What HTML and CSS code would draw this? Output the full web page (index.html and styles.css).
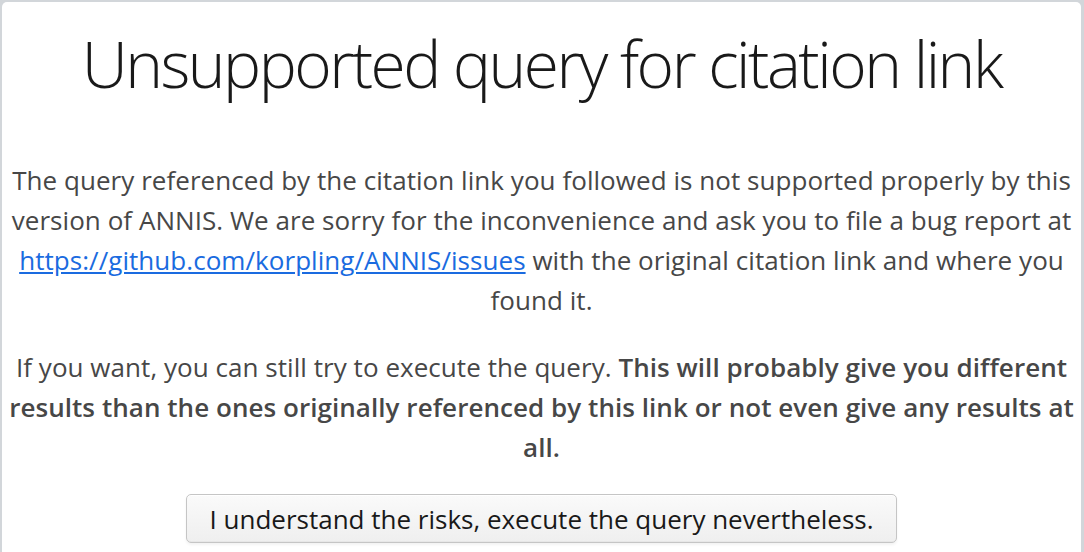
FILE: index.html
```html
<!DOCTYPE html>
<html lang="en">
<head>
<meta charset="utf-8">
<title>Unsupported query</title>
<link rel="stylesheet" href="styles.css">
</head>
<body>
<div class="panel">
  <h1 class="title">Unsupported query for citation link</h1>
  <p class="msg">The query referenced by the citation link you followed is not supported properly by this version of ANNIS. We are sorry for the inconvenience and ask you to file a bug report at <a href="#">https://github.com/korpling/ANNIS/issues</a> with the original citation link and where you found it.</p>
  <p class="msg">If you want, you can still try to execute the query. <strong>This will probably give you different results than the ones originally referenced by this link or not even give any results at all.</strong></p>
  <div class="actions">
    <button class="btn" type="button">I understand the risks, execute the query nevertheless.</button>
  </div>
</div>
</body>
</html>
```
FILE: styles.css
```css
html, body {
  margin: 0;
  padding: 0;
  height: 100%;
  overflow: hidden;
}
body {
  background: #d2d6da;
  font-family: "Open Sans", "DejaVu Sans", sans-serif;
  color: #474747;
}
.panel {
  margin: 2px 3px 0 2px;
  background: #fff;
  border-radius: 5px 5px 0 0;
  padding: 22px 2px 40px;
  min-height: 600px;
  text-align: center;
}
.title {
  margin: 0;
  font-size: 64px;
  line-height: 80px;
  font-weight: 300;
  color: #191919;
  letter-spacing: -2.5px;
}
.msg {
  margin: 56px 0 0;
  font-size: 26px;
  line-height: 40px;
  letter-spacing: 0.05px;
}
.msg + .msg {
  margin-top: 27px;
}
.msg a {
  color: #1a6be0;
  text-decoration: underline;
}
.msg strong {
  font-weight: 600;
}
.actions {
  margin-top: 27px;
  display: flex;
  justify-content: center;
}
.btn {
  font-family: inherit;
  font-size: 26px;
  color: #191919;
  height: 49px;
  padding: 0 22px;
  border: 1px solid #c5c5c5;
  border-radius: 5px;
  background: linear-gradient(to bottom, #fafafa 2%, #efefef 98%);
  box-shadow: inset 0 1px 0 #fff, inset 0 -1px 0 #e7e7e7, 0 2px 3px rgba(0,0,0,0.05);
  cursor: pointer;
}
```
